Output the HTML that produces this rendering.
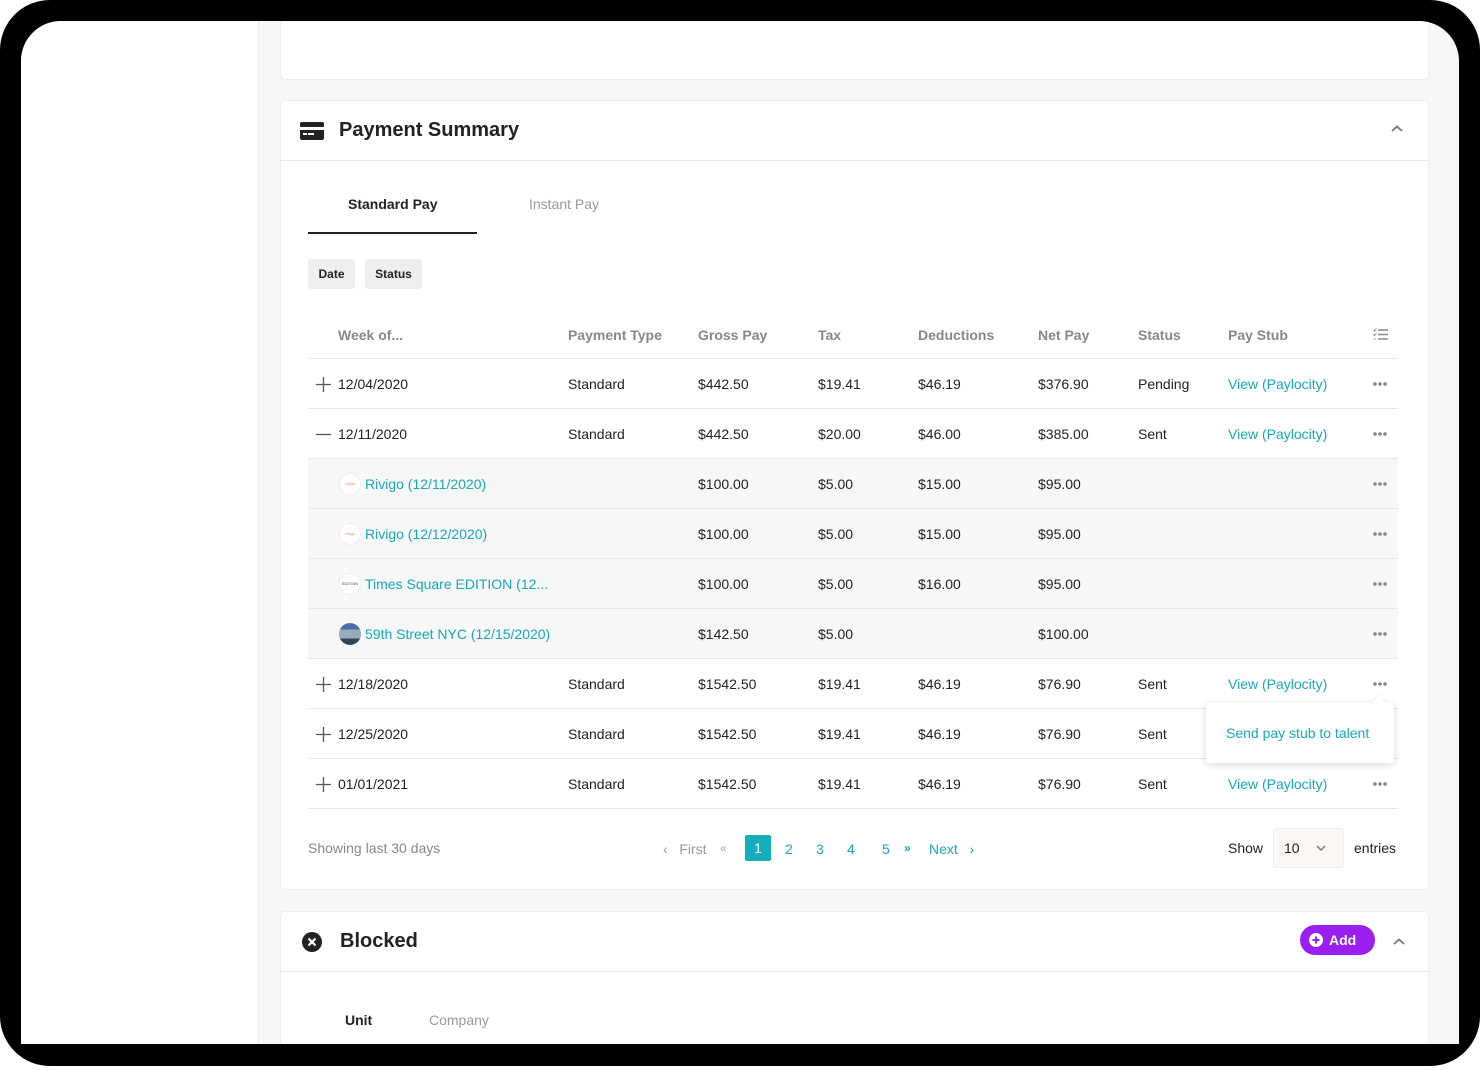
<!DOCTYPE html>
<html><head><meta charset="utf-8"><style>
*{margin:0;padding:0;box-sizing:border-box}
body{width:1480px;height:1071px;background:#fff;font-family:"Liberation Sans",Arial,sans-serif;position:relative;overflow:hidden;color:#222}
.bezel{position:absolute;left:0;top:0;width:1480px;height:1066px;background:#000;border-radius:50px}
.screen{position:absolute;left:21px;top:21px;width:1438px;height:1023px;background:#f7f7f7;border-radius:40px 40px 0 0;overflow:hidden}
.side{position:absolute;left:0;top:0;width:238px;height:100%;background:#fff;border-right:1px solid #ececec}
.card{position:absolute;left:259px;width:1149px;background:#fff;border-radius:5px;border:1px solid #eee}
.a{position:absolute;white-space:nowrap}
.t{font-size:14px;line-height:16px}
.teal{color:#17a9b9}
.hd{color:#888;font-weight:bold;font-size:14px}
.line{position:absolute;height:1px;background:#e8e8e8}
.sub{position:absolute;left:308px;width:1090px;height:50px;background:#f7f7f7}
.dots{position:absolute;width:14px;height:4px;background:radial-gradient(circle at 2px 2px,#888 1.6px,transparent 2px),radial-gradient(circle at 7px 2px,#888 1.6px,transparent 2px),radial-gradient(circle at 12px 2px,#888 1.6px,transparent 2px)}
.logo{position:absolute;width:22px;height:22px;border-radius:50%;background:#fff;border:1px solid #eee;font-size:4px;color:#e86;text-align:center;line-height:20px}
</style></head><body>
<div class="bezel"></div>
<div class="screen">
<div class="side"></div>
<div class="card" style="top:-10px;height:69px"></div>
<div class="card" style="top:79px;height:790px"></div>
<div class="card" style="top:890px;height:200px"></div>
</div>

<svg class="a" style="left:300px;top:122px" width="24" height="18" viewBox="0 0 24 18"><rect x="0" y="0" width="24" height="18" rx="2" fill="#222"/><rect x="0" y="5" width="24" height="3" fill="#fff"/><rect x="3" y="11" width="4" height="2" fill="#fff"/><rect x="8" y="11" width="6" height="2" fill="#fff"/></svg>
<div class="a" style="left:339px;top:119px;font-size:20px;font-weight:bold;color:#222">Payment Summary</div>
<svg class="a" style="left:1391px;top:125px" width="12" height="8" viewBox="0 0 12 8"><path d="M1 6 L6 1.5 L11 6" stroke="#777" stroke-width="1.8" fill="none"/></svg>
<div class="line" style="left:280px;width:1148px;top:160px"></div>

<div class="a t" style="left:348px;top:196px;font-weight:bold">Standard Pay</div>
<div class="a t" style="left:529px;top:196px;color:#999">Instant Pay</div>
<div class="a" style="left:308px;top:232px;width:169px;height:2px;background:#222"></div>

<div class="a" style="left:308px;top:259px;width:47px;height:30px;background:#eee;border-radius:3px;font-size:12px;font-weight:bold;text-align:center;line-height:30px">Date</div>
<div class="a" style="left:365px;top:259px;width:57px;height:30px;background:#eee;border-radius:3px;font-size:12px;font-weight:bold;text-align:center;line-height:30px">Status</div>

<div class="a hd" style="left:338px;top:327px">Week of...</div>
<div class="a hd" style="left:568px;top:327px">Payment Type</div>
<div class="a hd" style="left:698px;top:327px">Gross Pay</div>
<div class="a hd" style="left:818px;top:327px">Tax</div>
<div class="a hd" style="left:918px;top:327px">Deductions</div>
<div class="a hd" style="left:1038px;top:327px">Net Pay</div>
<div class="a hd" style="left:1138px;top:327px">Status</div>
<div class="a hd" style="left:1228px;top:327px">Pay Stub</div>
<svg class="a" style="left:1373px;top:328px" width="15" height="13" viewBox="0 0 15 13"><path d="M5 2h10M5 6.5h10M5 11h10" stroke="#888" stroke-width="1.4"/><path d="M0.5 2l1 1 2-2.5M0.5 6.5l1 1 2-2.5" stroke="#888" stroke-width="1" fill="none"/><circle cx="1.5" cy="11" r="0.8" fill="#888"/></svg>

<div class="sub" style="top:459px"></div>
<div class="sub" style="top:509px"></div>
<div class="sub" style="top:559px"></div>
<div class="sub" style="top:609px"></div>

<div class="line" style="left:308px;width:1090px;top:358px"></div>
<div class="line" style="left:308px;width:1090px;top:408px"></div>
<div class="line" style="left:308px;width:1090px;top:458px"></div>
<div class="line" style="left:308px;width:1090px;top:508px"></div>
<div class="line" style="left:308px;width:1090px;top:558px"></div>
<div class="line" style="left:308px;width:1090px;top:608px"></div>
<div class="line" style="left:308px;width:1090px;top:658px"></div>
<div class="line" style="left:308px;width:1090px;top:708px"></div>
<div class="line" style="left:308px;width:1090px;top:758px"></div>
<div class="line" style="left:308px;width:1090px;top:808px"></div>

<svg class="a" style="left:316px;top:377px" width="15" height="15"><path d="M7.5 0v15M0 7.5h15" stroke="#555" stroke-width="1.3"/></svg>
<div class="a t" style="left:338px;top:376px">12/04/2020</div><div class="a t" style="left:568px;top:376px">Standard</div><div class="a t" style="left:698px;top:376px">$442.50</div><div class="a t" style="left:818px;top:376px">$19.41</div><div class="a t" style="left:918px;top:376px">$46.19</div><div class="a t" style="left:1038px;top:376px">$376.90</div><div class="a t" style="left:1138px;top:376px">Pending</div><div class="a t teal" style="left:1228px;top:376px">View (Paylocity)</div><div class="dots" style="left:1373px;top:382px"></div>

<svg class="a" style="left:316px;top:427px" width="15" height="15"><path d="M0 7.5h15" stroke="#555" stroke-width="1.3"/></svg>
<div class="a t" style="left:338px;top:426px">12/11/2020</div><div class="a t" style="left:568px;top:426px">Standard</div><div class="a t" style="left:698px;top:426px">$442.50</div><div class="a t" style="left:818px;top:426px">$20.00</div><div class="a t" style="left:918px;top:426px">$46.00</div><div class="a t" style="left:1038px;top:426px">$385.00</div><div class="a t" style="left:1138px;top:426px">Sent</div><div class="a t teal" style="left:1228px;top:426px">View (Paylocity)</div><div class="dots" style="left:1373px;top:432px"></div>

<div class="logo" style="left:339px;top:473px">rivigo</div>
<div class="a t teal" style="left:365px;top:476px">Rivigo (12/11/2020)</div><div class="a t" style="left:698px;top:476px">$100.00</div><div class="a t" style="left:818px;top:476px">$5.00</div><div class="a t" style="left:918px;top:476px">$15.00</div><div class="a t" style="left:1038px;top:476px">$95.00</div><div class="dots" style="left:1373px;top:482px"></div>

<div class="logo" style="left:339px;top:523px">rivigo</div>
<div class="a t teal" style="left:365px;top:526px">Rivigo (12/12/2020)</div><div class="a t" style="left:698px;top:526px">$100.00</div><div class="a t" style="left:818px;top:526px">$5.00</div><div class="a t" style="left:918px;top:526px">$15.00</div><div class="a t" style="left:1038px;top:526px">$95.00</div><div class="dots" style="left:1373px;top:532px"></div>

<div class="logo" style="left:339px;top:573px;color:#444">EDITION</div>
<div class="a t teal" style="left:365px;top:576px">Times Square EDITION (12...</div><div class="a t" style="left:698px;top:576px">$100.00</div><div class="a t" style="left:818px;top:576px">$5.00</div><div class="a t" style="left:918px;top:576px">$16.00</div><div class="a t" style="left:1038px;top:576px">$95.00</div><div class="dots" style="left:1373px;top:582px"></div>

<div class="logo" style="left:339px;top:623px;background:linear-gradient(#4a6fa8 0 30%,#9ab 30% 70%,#345 70%);border:none"></div>
<div class="a t teal" style="left:365px;top:626px">59th Street NYC (12/15/2020)</div><div class="a t" style="left:698px;top:626px">$142.50</div><div class="a t" style="left:818px;top:626px">$5.00</div><div class="a t" style="left:1038px;top:626px">$100.00</div><div class="dots" style="left:1373px;top:632px"></div>

<svg class="a" style="left:316px;top:677px" width="15" height="15"><path d="M7.5 0v15M0 7.5h15" stroke="#555" stroke-width="1.3"/></svg>
<div class="a t" style="left:338px;top:676px">12/18/2020</div><div class="a t" style="left:568px;top:676px">Standard</div><div class="a t" style="left:698px;top:676px">$1542.50</div><div class="a t" style="left:818px;top:676px">$19.41</div><div class="a t" style="left:918px;top:676px">$46.19</div><div class="a t" style="left:1038px;top:676px">$76.90</div><div class="a t" style="left:1138px;top:676px">Sent</div><div class="a t teal" style="left:1228px;top:676px">View (Paylocity)</div><div class="dots" style="left:1373px;top:682px"></div>

<svg class="a" style="left:316px;top:727px" width="15" height="15"><path d="M7.5 0v15M0 7.5h15" stroke="#555" stroke-width="1.3"/></svg>
<div class="a t" style="left:338px;top:726px">12/25/2020</div><div class="a t" style="left:568px;top:726px">Standard</div><div class="a t" style="left:698px;top:726px">$1542.50</div><div class="a t" style="left:818px;top:726px">$19.41</div><div class="a t" style="left:918px;top:726px">$46.19</div><div class="a t" style="left:1038px;top:726px">$76.90</div><div class="a t" style="left:1138px;top:726px">Sent</div>

<svg class="a" style="left:316px;top:777px" width="15" height="15"><path d="M7.5 0v15M0 7.5h15" stroke="#555" stroke-width="1.3"/></svg>
<div class="a t" style="left:338px;top:776px">01/01/2021</div><div class="a t" style="left:568px;top:776px">Standard</div><div class="a t" style="left:698px;top:776px">$1542.50</div><div class="a t" style="left:818px;top:776px">$19.41</div><div class="a t" style="left:918px;top:776px">$46.19</div><div class="a t" style="left:1038px;top:776px">$76.90</div><div class="a t" style="left:1138px;top:776px">Sent</div><div class="a t teal" style="left:1228px;top:776px">View (Paylocity)</div><div class="dots" style="left:1373px;top:782px"></div>

<div class="a" style="left:1206px;top:703px;width:188px;height:60px;background:#fff;border-radius:3px;box-shadow:0 2px 8px rgba(0,0,0,.15)"></div>
<div class="a" style="left:1374px;top:698px;width:10px;height:10px;background:#fff;transform:rotate(45deg);box-shadow:-1px -1px 2px rgba(0,0,0,.06)"></div>
<div class="a t teal" style="left:1226px;top:725px">Send pay stub to talent</div>

<div class="a t" style="left:308px;top:840px;color:#888">Showing last 30 days</div>
<div class="a t" style="left:663px;top:841px;color:#999">‹&nbsp;&nbsp; First</div>
<div class="a t" style="left:720px;top:840px;color:#aaa;font-size:12px">«</div>
<div class="a" style="left:745px;top:835px;width:26px;height:26px;background:#14adbb;border-radius:2px;color:#fff;font-size:14px;text-align:center;line-height:26px">1</div>
<div class="a t teal" style="left:785px;top:841px">2</div>
<div class="a t teal" style="left:816px;top:841px">3</div>
<div class="a t teal" style="left:847px;top:841px">4</div>
<div class="a t teal" style="left:882px;top:841px">5</div>
<div class="a t teal" style="left:904px;top:840px;font-size:12px;font-weight:bold">»</div>
<div class="a t teal" style="left:929px;top:841px">Next&nbsp;&nbsp; ›</div>
<div class="a t" style="left:1228px;top:840px">Show</div>
<div class="a" style="left:1273px;top:828px;width:71px;height:40px;background:#faf8f6;border:1px solid #eee;border-radius:3px"></div>
<div class="a t" style="left:1284px;top:840px">10</div>
<svg class="a" style="left:1316px;top:845px" width="10" height="6"><path d="M1 1l4 4 4-4" stroke="#888" stroke-width="1.6" fill="none"/></svg>
<div class="a t" style="left:1354px;top:840px">entries</div>

<svg class="a" style="left:302px;top:932px" width="20" height="20"><circle cx="10" cy="10" r="10" fill="#222"/><path d="M6.5 6.5l7 7M13.5 6.5l-7 7" stroke="#fff" stroke-width="2.2"/></svg>
<div class="a" style="left:340px;top:930px;font-size:20px;font-weight:bold">Blocked</div>
<div class="a" style="left:1300px;top:925px;width:75px;height:30px;background:#9a1ff0;border-radius:15px;color:#fff;font-weight:bold;font-size:14px;line-height:30px;padding-left:29px">Add</div>
<svg class="a" style="left:1309px;top:933px" width="14" height="14"><circle cx="7" cy="7" r="7" fill="#fff"/><path d="M7 3.5v7M3.5 7h7" stroke="#9a1ff0" stroke-width="2"/></svg>
<svg class="a" style="left:1393px;top:938px" width="12" height="8" viewBox="0 0 12 8"><path d="M1 6 L6 1.5 L11 6" stroke="#777" stroke-width="1.8" fill="none"/></svg>
<div class="line" style="left:280px;width:1148px;top:971px"></div>
<div class="a t" style="left:345px;top:1012px;font-weight:bold">Unit</div>
<div class="a t" style="left:429px;top:1012px;color:#999">Company</div>
</body></html>
